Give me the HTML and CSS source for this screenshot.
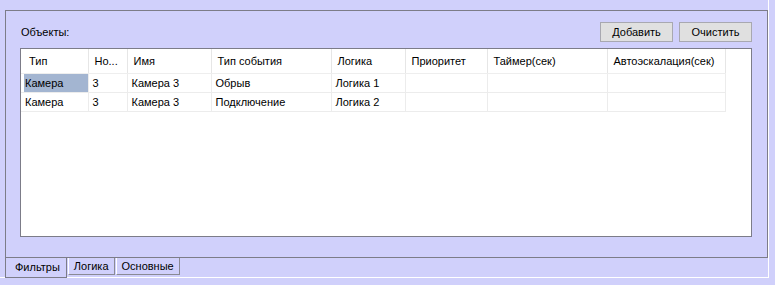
FILE: index.html
```html
<!DOCTYPE html>
<html lang="ru">
<head>
  <meta charset="UTF-8" />
  <title>Фильтры</title>
  <link rel="stylesheet" href="styles.css">
</head>
<body>
  <div class="tabctl">
    <div class="page">
      <div class="toolbar">
        <span class="caption">Объекты:</span>
        <div class="buttons">
          <button>Добавить</button>
          <button>Очистить</button>
        </div>
      </div>

      <div class="listbox">
        <table class="grid">
          <colgroup>
            <col style="width:67px"><col style="width:39px"><col style="width:84px"><col style="width:120px">
            <col style="width:74px"><col style="width:82px"><col style="width:120px"><col style="width:118px">
          </colgroup>
          <thead>
            <tr>
              <th class="first">Тип</th><th>Но...</th><th>Имя</th><th>Тип события</th>
              <th>Логика</th><th>Приоритет</th><th>Таймер(сек)</th><th>Автоэскалация(сек)</th>
            </tr>
          </thead>
          <tbody>
            <tr>
              <td class="first"><span class="selected">Камера</span></td><td>3</td><td>Камера 3</td><td>Обрыв</td>
              <td>Логика 1</td><td></td><td></td><td></td>
            </tr>
            <tr>
              <td class="first"><span>Камера</span></td><td>3</td><td>Камера 3</td><td>Подключение</td>
              <td>Логика 2</td><td></td><td></td><td></td>
            </tr>
          </tbody>
        </table>
      </div>
    </div>

    <div class="tabs">
      <div class="tab active">Фильтры</div>
      <div class="tab">Логика</div>
      <div class="tab">Основные</div>
    </div>
  </div>
</body>
</html>
```

FILE: styles.css
```css
html, body {
  margin: 0;
  background: #d0d0fb;
}
body {
  font-family: 'Liberation Sans', Arial, sans-serif;
  font-size: 11px;
  color: #000;
}
.tabctl {
  width: 769px;
  height: 278px;
  border-right: 1px solid #ffffff;
  border-bottom: 1px solid #ffffff;
  padding: 10px 0 0 5px;
  box-sizing: border-box;
}
.page {
  width: 763px;
  height: 248px;
  box-sizing: border-box;
  border: 1px solid #7c7c88;
  padding: 11px 15px 0 14px;
}
.toolbar {
  display: flex;
  align-items: center;
  justify-content: space-between;
  height: 20px;
  margin-bottom: 6px;
}
.caption {
  padding-left: 1px;
}
.buttons {
  display: flex;
  gap: 6px;
}
button {
  font-family: inherit;
  font-size: 11px;
  width: 73px;
  height: 20px;
  padding: 0;
  background: #e0e0e0;
  border: 1px solid #a8a8b0;
  color: #000;
}
.listbox {
  height: 189px;
  box-sizing: border-box;
  border: 1px solid #7c7c88;
  background: #ffffff;
}
.grid {
  table-layout: fixed;
  border-collapse: collapse;
  width: 704px;
}
.grid th {
  font-weight: normal;
  text-align: left;
  height: 24px;
  padding: 0 0 0 6px;
  border-right: 1px solid #e6e6e6;
  border-bottom: 1px solid #eeeeee;
  white-space: nowrap;
  overflow: hidden;
}
.grid th.first {
  padding-left: 8px;
}
.grid td {
  height: 18px;
  padding: 0 0 0 4px;
  border-right: 1px solid #ececec;
  border-bottom: 1px solid #ececec;
  white-space: nowrap;
}
.grid td.first {
  padding-left: 3px;
}
.grid td.first span {
  display: block;
  height: 18px;
  line-height: 18px;
  padding-left: 1px;
}
.grid td.first span.selected {
  background: #a3b5d1;
}
.tabs {
  display: flex;
  align-items: flex-start;
  padding-left: 1px;
}
.tab {
  height: 17px;
  line-height: 16px;
  box-sizing: border-box;
  border: 1px solid #8a8a94;
  border-top: none;
  border-left-color: #ffffff;
  padding: 0 5px 0 5px;
  margin-left: 1px;
}
.tab.active {
  height: 20px;
  line-height: 19px;
  margin-left: -1px;
  padding: 0 6px 0 9px;
  border-left: 1px solid #7c7c88;
  border-right: 1px solid #7c7c88;
  border-bottom: 1px solid #7c7c88;
}
```
